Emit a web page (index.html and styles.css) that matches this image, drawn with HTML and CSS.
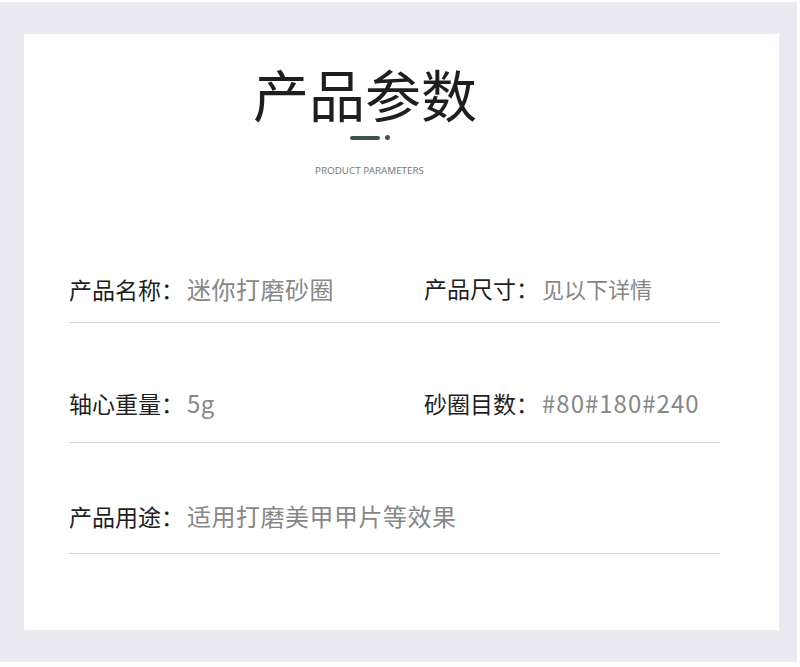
FILE: index.html
```html
<!DOCTYPE html>
<html lang="zh-CN">
<head>
<meta charset="utf-8">
<title>产品参数</title>
<link rel="stylesheet" href="styles.css">
</head>
<body>
<div class="frame">
  <div class="card">
    <div class="header">
      <h1 class="title">产品参数</h1>
      <div class="deco"><span class="dash"></span><span class="dot"></span></div>
      <p class="subtitle">PRODUCT PARAMETERS</p>
    </div>
    <div class="params">
      <div class="row row-1">
        <div class="item"><span class="label">产品名称：</span><span class="value">迷你打磨砂圈</span></div>
        <div class="item"><span class="label">产品尺寸：</span><span class="value value-sm">见以下详情</span></div>
      </div>
      <div class="row row-2">
        <div class="item"><span class="label">轴心重量：</span><span class="value">5g</span></div>
        <div class="item"><span class="label">砂圈目数：</span><span class="value value-wide">#80#180#240</span></div>
      </div>
      <div class="row row-3">
        <div class="item"><span class="label">产品用途：</span><span class="value">适用打磨美甲甲片等效果</span></div>
      </div>
    </div>
  </div>
</div>
</body>
</html>
```

FILE: styles.css
```css
html, body {
  margin: 0;
  padding: 0;
  background: #fdfdfe;
}
body {
  font-family: "Noto Sans CJK SC", "Noto Sans", sans-serif;
}
.frame {
  box-sizing: border-box;
  width: 797px;
  height: 660px;
  margin-top: 2px;
  padding: 32px 18px 32px 24px;
  background: #ebeaf0;
}
.card {
  box-sizing: border-box;
  height: 100%;
  background: #ffffff;
  padding: 31px 0 0 0;
}
.header {
  width: 682px;
  display: flex;
  flex-direction: column;
  align-items: center;
}
.title {
  margin: 0;
  font-size: 56px;
  line-height: 56px;
  font-weight: 400;
  color: #1e1e1e;
  letter-spacing: 0;
}
.deco {
  display: flex;
  align-items: center;
  gap: 5px;
  height: 5px;
  margin-top: 14px;
  padding-left: 10px;
}
.dash {
  width: 30px;
  height: 4px;
  border-radius: 2px;
  background: #3e5547;
}
.dot {
  width: 5px;
  height: 5px;
  border-radius: 50%;
  background: #3e5547;
}
.subtitle {
  margin: 25px 0 0 0;
  padding-left: 9px;
  font-family: "Noto Sans", sans-serif;
  font-size: 9.8px;
  line-height: 12px;
  color: #7a7a7a;
  letter-spacing: 0;
}
.params {
  width: 651px;
  margin-left: 45px;
}
.row {
  display: grid;
  grid-template-columns: 355px 1fr;
  border-bottom: 1px solid #cbd2da;
  font-size: 23px;
  line-height: 23px;
}
.row-1 { padding: 100px 0 21px; }
.row-2 { padding: 68px 0 27px; }
.row-3 { padding: 61px 0 25px; }
.item {
  white-space: nowrap;
}
.label {
  color: #1f1f1f;
}
.value {
  margin-left: 3px;
  font-size: 24px;
  letter-spacing: 0.5px;
  color: #878787;
}
.value-sm {
  font-size: 22px;
  letter-spacing: 0;
}
.value-wide {
  letter-spacing: 1px;
}
```
